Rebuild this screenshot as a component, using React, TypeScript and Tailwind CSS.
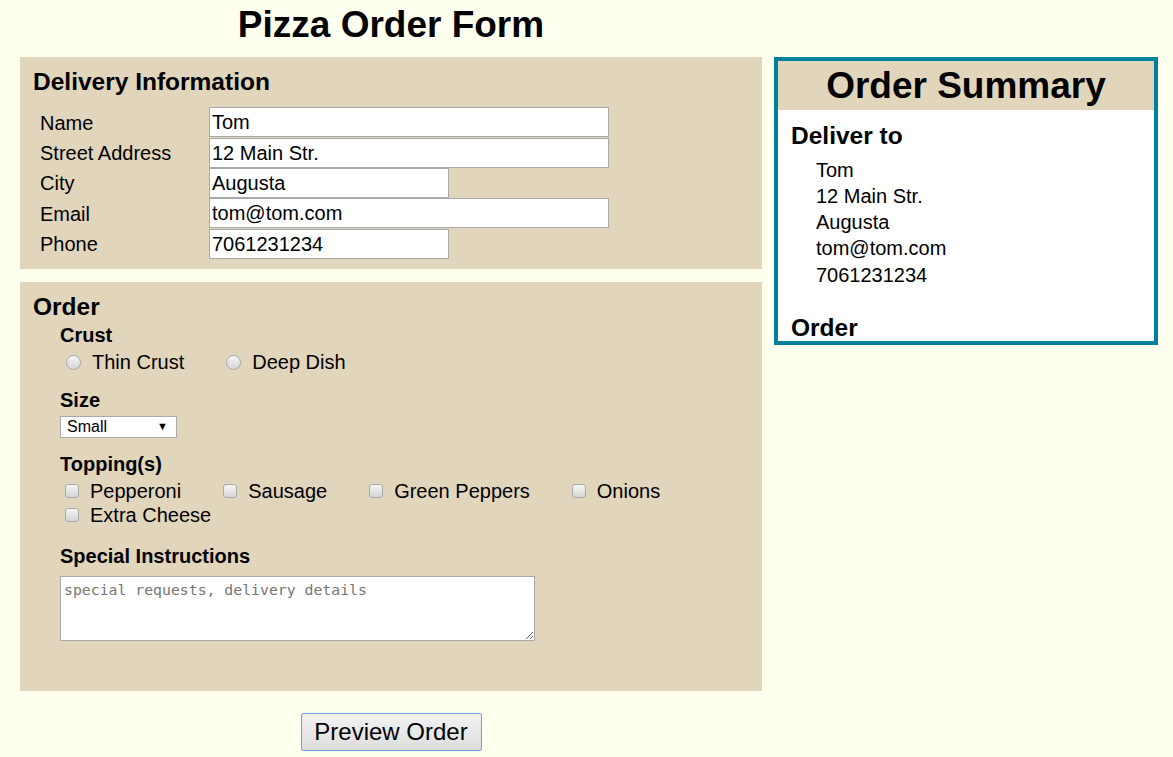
import React, { useState } from "react";

const sans = { fontFamily: '"Liberation Sans", Arial, sans-serif' };

type Field = { label: string; value: string; wide: boolean };

const fields: Field[] = [
    { label: "Name", value: "Tom", wide: true },
    { label: "Street Address", value: "12 Main Str.", wide: true },
    { label: "City", value: "Augusta", wide: false },
    { label: "Email", value: "tom@tom.com", wide: true },
    { label: "Phone", value: "7061231234", wide: false },
];

const toppings = ["Pepperoni", "Sausage", "Green Peppers", "Onions", "Extra Cheese"];

export default function App() {
    const [values, setValues] = useState(fields.map((f) => f.value));
    const [crust, setCrust] = useState("");
    const [size, setSize] = useState("Small");
    const [picked, setPicked] = useState<Array<string>>([]);
    const [note, setNote] = useState("");

    const toggle = (t: string) =>
        setPicked((p) => (p.includes(t) ? p.filter((x) => x !== t) : [...p, t]));

    return (
        <div className="min-h-[757px] bg-[#fffff0] text-black" style={sans}>
            <div className="flex items-start">
                {/* form column */}
                <div className="ml-[20px] w-[742px] flex flex-col">
                    <h1 className="text-center text-[37px] font-bold leading-[42px] pt-[4px] pb-[11px]">
                        Pizza Order Form
                    </h1>

                    <section className="bg-[#e1d5bb] pl-[13px] pt-[11px] pb-[10px]">
                        <h2 className="text-[24.5px] font-bold leading-[28px]">Delivery Information</h2>
                        <div className="mt-[11px] ml-[7px] flex flex-col">
                            {fields.map((f, i) => (
                                <div key={f.label} className="flex items-center h-[30.4px]">
                                    <span className="w-[169px] pt-[2px] text-[20px] leading-[23px]">{f.label}</span>
                                    <input
                                        value={values[i]}
                                        onChange={(e) => setValues(values.map((v, j) => (j === i ? e.target.value : v)))}
                                        className={`${f.wide ? "w-[400px]" : "w-[240px]"} h-[30px] border border-[#a9a9a9] bg-white px-[2px] text-[20px] outline-none`}
                                        style={sans}
                                    />
                                </div>
                            ))}
                        </div>
                    </section>

                    <section className="mt-[13px] bg-[#e1d5bb] pl-[13px] pt-[11px] pb-[50px]">
                        <h2 className="text-[24.5px] font-bold leading-[28px]">Order</h2>
                        <div className="ml-[27px] flex flex-col">
                            <div className="mt-[3.5px] text-[20px] font-bold leading-[23px]">Crust</div>
                            <div className="mt-[3px] flex h-[24px] items-center">
                                {["Thin Crust", "Deep Dish"].map((c) => (
                                    <label key={c} className="flex items-center mr-[36px] text-[20px] leading-[24px] cursor-pointer">
                                        <input
                                            type="radio"
                                            name="crust"
                                            checked={crust === c}
                                            onChange={() => setCrust(c)}
                                            className="appearance-none ml-[6px] mr-[11px] w-[15px] h-[15px] rounded-full border border-[#a8a8a8] bg-linear-to-b from-[#f6f6f6] to-[#d6d6d6] checked:bg-[#444] checked:border-[#444]"
                                        />
                                        {c}
                                    </label>
                                ))}
                            </div>

                            <div className="mt-[14.5px] text-[20px] font-bold leading-[23px]">Size</div>
                            <div className="relative mt-[3.5px] w-[117px] h-[22px]">
                                <select
                                    value={size}
                                    onChange={(e) => setSize(e.target.value)}
                                    className="appearance-none w-full h-full border border-[#a9a9a9] bg-white pl-[6px] text-[16px] leading-[20px] outline-none"
                                    style={sans}
                                >
                                    <option>Small</option>
                                    <option>Medium</option>
                                    <option>Large</option>
                                </select>
                                <span className="pointer-events-none absolute right-[9px] top-[3px] text-[11px] leading-[16px]">▼</span>
                            </div>

                            <div className="mt-[15.5px] text-[20px] font-bold leading-[23px]">Topping(s)</div>
                            <div className="mt-[3.5px] flex flex-wrap w-[690px]">
                                {toppings.map((t) => (
                                    <label key={t} className="flex items-center h-[24px] mr-[37px] text-[20px] leading-[24px] cursor-pointer">
                                        <input
                                            type="checkbox"
                                            checked={picked.includes(t)}
                                            onChange={() => toggle(t)}
                                            className="appearance-none ml-[5px] mr-[11px] w-[14px] h-[14px] rounded-[3px] border border-[#a8a8a8] bg-linear-to-b from-[#f6f6f6] to-[#d6d6d6] checked:bg-[#444] checked:border-[#444]"
                                        />
                                        {t}
                                    </label>
                                ))}
                            </div>

                            <div className="mt-[17.5px] text-[20px] font-bold leading-[23px]">Special Instructions</div>
                            <textarea
                                value={note}
                                onChange={(e) => setNote(e.target.value)}
                                placeholder="special requests, delivery details"
                                className="mt-[8.5px] w-[475px] h-[65px] border border-[#a9a9a9] bg-white px-[3px] pt-[4px] pb-[2px] text-[14.8px] leading-[18px] placeholder:text-[#757575] outline-none"
                                style={{ fontFamily: '"DejaVu Sans Mono", "Liberation Mono", monospace' }}
                            />
                        </div>
                    </section>

                    <div className="mt-[22px] flex justify-center">
                        <button
                            type="button"
                            className="w-[181px] h-[38px] rounded-[2px] border border-[#6f9fe0] bg-linear-to-b from-[#f3f3f3] to-[#dddddd] text-[24px] leading-[28px] cursor-pointer"
                            style={sans}
                        >
                            Preview Order
                        </button>
                    </div>
                </div>

                {/* summary column */}
                <aside className="ml-[12px] mt-[57px] w-[384px] h-[288px] border-[4px] border-[#00819b] bg-white overflow-hidden">
                    <div className="bg-[#e1d5bb] h-[49px] flex items-center justify-center">
                        <h2 className="text-[37px] font-bold leading-[42px]">Order Summary</h2>
                    </div>
                    <div className="pl-[13px] pt-[12px]">
                        <h3 className="text-[24.5px] font-bold leading-[28px]">Deliver to</h3>
                        <div className="mt-[6.5px] pl-[25px] text-[20px] leading-[26.3px]">
                            {values.map((v, i) => (
                                <div key={i}>{v}</div>
                            ))}
                        </div>
                        <h3 className="mt-[26px] text-[24.5px] font-bold leading-[28px]">Order</h3>
                    </div>
                </aside>
            </div>
        </div>
    );
}
